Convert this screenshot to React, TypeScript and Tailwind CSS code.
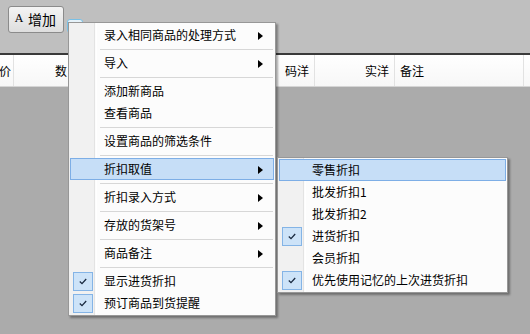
import React from "react";

const font = { fontFamily: '"Noto Sans CJK SC", "Noto Sans", sans-serif' };

function Arrow() {
  return (
    <svg width="5" height="8" viewBox="0 0 5 8" className="absolute right-[10px] top-[7px]">
      <path d="M0 0 L5 4 L0 8 Z" fill="#000" />
    </svg>
  );
}

function Check() {
  return (
    <div className="absolute left-[2px] top-[1px] w-[20px] h-[19px] bg-[#cde3f8] border border-[#84b4e6] flex items-center justify-center">
      <svg width="8" height="7" viewBox="0 0 8 7">
        <path d="M0.8 3.5 L3 5.6 L7.2 1" stroke="#1a2a40" strokeWidth="1.3" fill="none" />
      </svg>
    </div>
  );
}

type Item = { t: string; arrow?: boolean; hl?: boolean; check?: boolean } | "sep";

function Menu({ items, textLeft, width }: { items: Item[]; textLeft: number; width: number }) {
  return (
    <div
      className="relative bg-[#fcfcfc] border border-[#979797] py-[1px] shadow-[2px_2px_2px_rgba(0,0,0,0.35)]"
      style={{ width }}
    >
      <div className="absolute left-0 top-0 bottom-0 w-[26px] bg-[#f1f1f1] border-r border-[#e3e3e3]" />
      <div className="absolute left-[27px] top-0 bottom-0 w-px bg-white" />
      <div className="relative flex flex-col">
        {items.map((it, i) =>
          it === "sep" ? (
            <div key={i} className="h-[6px] flex items-center" style={{ paddingLeft: textLeft - 4 }}>
              <div className="h-px w-full mr-[2px] bg-[#d7d7d7]" />
            </div>
          ) : (
            <div
              key={i}
              className={
                "relative h-[22px] mx-[1px] flex items-center text-[12px] text-black " +
                (it.hl ? "bg-[#c6def7] border border-[#7daee6]" : "border border-transparent")
              }
            >
              {it.check && <Check />}
              <span style={{ marginLeft: textLeft - 2 }}>{it.t}</span>
              {it.arrow && <Arrow />}
            </div>
          )
        )}
      </div>
    </div>
  );
}

export default function App() {
  const main: Item[] = [
    { t: "录入相同商品的处理方式", arrow: true },
    "sep",
    { t: "导入", arrow: true },
    "sep",
    { t: "添加新商品" },
    { t: "查看商品" },
    "sep",
    { t: "设置商品的筛选条件" },
    "sep",
    { t: "折扣取值", arrow: true, hl: true },
    "sep",
    { t: "折扣录入方式", arrow: true },
    "sep",
    { t: "存放的货架号", arrow: true },
    "sep",
    { t: "商品备注", arrow: true },
    "sep",
    { t: "显示进货折扣", check: true },
    { t: "预订商品到货提醒", check: true },
  ];
  const sub: Item[] = [
    { t: "零售折扣", hl: true },
    { t: "批发折扣1" },
    { t: "批发折扣2" },
    { t: "进货折扣", check: true },
    { t: "会员折扣" },
    { t: "优先使用记忆的上次进货折扣", check: true },
  ];
  return (
    <div className="relative w-[530px] h-[334px] overflow-hidden flex flex-col bg-[#ababab]" style={font}>
      <div className="h-[53px] bg-[#bfbfbf] flex items-start pt-[6px] pl-[8px] gap-[3px]">
        <div className="h-[27px] w-[56px] rounded-[3px] border border-[#8b8b8b] bg-gradient-to-b from-[#f4f4f4] to-[#dedede] flex items-center pl-[6px] gap-[5px] text-[14px] text-black">
          <span className="text-[11px]" style={{ fontFamily: '"DejaVu Serif", serif' }}>A</span>
          <span>增加</span>
        </div>
        <div className="mt-[13px] h-[14px] w-[16px] rounded-[3px] border border-[#79c0e6] bg-[#e6f2f9]" />
      </div>
      <div className="h-[2px] bg-[#3a3a3a]" />
      <div className="h-[32px] bg-gradient-to-b from-white to-[#f7f7f7] border-b border-[#d5d5d5] flex text-[12px] text-black">
        <div className="w-[15px] border-r border-[#e2e2e2] flex items-center -ml-[1px]">价</div>
        <div className="w-[53px] flex items-center justify-end">数</div>
        <div className="w-[218px]" />
        <div className="w-[30px] border-r border-[#e2e2e2] flex items-center">码洋</div>
        <div className="w-[80px] border-r border-[#e2e2e2] flex items-center justify-end pr-[5px]">实洋</div>
        <div className="w-[129px] border-r border-[#e2e2e2] flex items-center pl-[5px]">备注</div>
      </div>
      <div className="flex-1" />

      <div className="absolute left-[68px] top-[22px]">
        <Menu items={main} textLeft={35} width={208} />
      </div>
      <div className="absolute left-[277px] top-[157px]">
        <Menu items={sub} textLeft={34} width={231} />
      </div>
    </div>
  );
}
